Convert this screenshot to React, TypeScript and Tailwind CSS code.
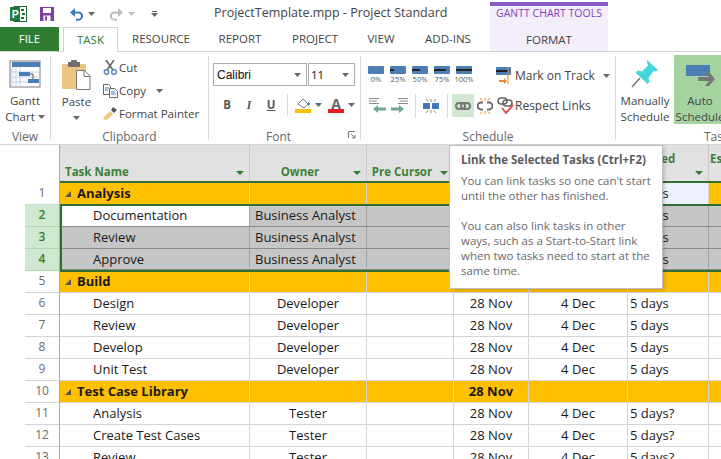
import React from 'react';

const Caret = ({ className = '' }: { className?: string }) => (
  <svg width="7" height="4" viewBox="0 0 7 4" className={className}>
    <path d="M0 0h7L3.5 4z" fill="#666" />
  </svg>
);

const ProjectLogo = () => (
  <svg width="17" height="16" viewBox="0 0 17 16">
    <rect x="4" y="0.5" width="12.5" height="15" fill="#fff" stroke="#1f6b35" />
    <rect x="11" y="3" width="3" height="2" fill="#1f6b35" />
    <rect x="12" y="7" width="3" height="2" fill="#1f6b35" />
    <rect x="11" y="11" width="3" height="2" fill="#1f6b35" />
    <rect x="0" y="1" width="10" height="14" fill="#1f7a3c" />
    <text x="1.8" y="12" fontSize="10.5" fontWeight="700" fill="#fff" fontFamily="Liberation Sans">P</text>
  </svg>
);

const SaveIcon = () => (
  <svg width="14" height="14" viewBox="0 0 14 14">
    <rect width="14" height="14" fill="#7e3fa8" />
    <rect x="3" y="1" width="8" height="5" fill="#fff" />
    <rect x="3.5" y="8.5" width="7" height="5.5" fill="#fff" />
    <rect x="5" y="9.5" width="2" height="4" fill="#7e3fa8" />
  </svg>
);

const UndoIcon = ({ color, flip }: { color: string; flip?: boolean }) => (
  <svg width="15" height="14" viewBox="0 0 15 14" style={flip ? { transform: 'scaleX(-1)' } : undefined}>
    <path d="M2 5.5h7.5a3.6 3.6 0 0 1 0 7.2H7" fill="none" stroke={color} strokeWidth="2" />
    <path d="M6 1 1 5.5 6 10z" fill={color} />
  </svg>
);

const GanttIcon = () => (
  <svg width="32" height="28" viewBox="0 0 32 28">
    <rect x="1" y="1" width="30" height="26" fill="#fff" stroke="#7b7b7b" />
    <rect x="3" y="2" width="28" height="5" fill="#4a7eb5" />
    <path d="M3 12h28M3 17h28M3 22h28M7 7v20M11 7v20M3 7v20" stroke="#bcd0e4" strokeWidth="1" />
    <rect x="10" y="12" width="11" height="4" fill="#4a7eb5" />
    <rect x="19" y="19" width="11" height="4" fill="#4a7eb5" />
    <path d="M21 14h3v5" stroke="#555" fill="none" />
  </svg>
);

const PasteIcon = () => (
  <svg width="29" height="31" viewBox="0 0 29 31">
    <rect x="0" y="4" width="24" height="25" rx="1" fill="#ecc681" />
    <path d="M6 2h12v5H6z" fill="#6f6f6f" />
    <rect x="9" y="0" width="6" height="4" rx="1" fill="#6f6f6f" />
    <path d="M14.5 10.5h8l5.5 5.5v13.5H14.5z" fill="#fff" stroke="#777" />
    <path d="M22 10.5v6h6" fill="none" stroke="#777" />
  </svg>
);

const CutIcon = () => (
  <svg width="15" height="15" viewBox="0 0 15 15">
    <path d="M3 0l7 10M11 0 4 10" stroke="#666" strokeWidth="1.6" fill="none" />
    <circle cx="3.5" cy="12" r="2.3" fill="none" stroke="#3b7bbd" strokeWidth="1.2" />
    <circle cx="11" cy="12" r="2.3" fill="none" stroke="#3b7bbd" strokeWidth="1.2" />
  </svg>
);

const CopyIcon = () => (
  <svg width="15" height="14" viewBox="0 0 15 14">
    <path d="M.5.5h5l2 2v8h-7z" fill="#fff" stroke="#666" />
    <path d="M6.5 4.5h5l3 3v6h-8z" fill="#fff" stroke="#666" />
    <path d="M2 4h4M2 6h3M8 8h4M8 10h5" stroke="#3b7bbd" />
  </svg>
);

const PainterIcon = () => (
  <svg width="16" height="15" viewBox="0 0 16 15">
    <path d="M11 1l4 3-3 3-3-3z" fill="#555" />
    <path d="M8 5l3 3-3 3-3 3-1-1-1 1-2-1 2-3z" fill="#ecc681" />
  </svg>
);

const PctBar = ({ label, fill }: { label: string; fill: number }) => (
  <div className="flex flex-col items-center w-[16px]">
    <div className="w-[16px] h-[8px] bg-[#4a7eb5] rounded-[1px] flex items-center">
      {fill > 0 && <div className="h-[2px] bg-[#222]" style={{ width: `${fill}%` }} />}
    </div>
    <span className="text-[7.5px] leading-[10px] text-[#555] whitespace-nowrap">{label}</span>
  </div>
);

const IndentIcon = ({ flip }: { flip?: boolean }) => (
  <svg width="19" height="16" viewBox="0 0 19 16" style={flip ? { transform: 'scaleX(-1)' } : undefined}>
    <path d="M1 .5h10M1 3h8M1 5.5h10" stroke="#8a8a8a" />
    <path d="M5 11l5-4v2.500h8v3h-8V15z" fill="#6ea796" />
  </svg>
);

const SplitIcon = () => (
  <svg width="16" height="14" viewBox="0 0 16 14">
    <rect x="0" y="4" width="7" height="6" fill="#3f78b8" />
    <rect x="9" y="4" width="7" height="6" fill="#3f78b8" />
    <path d="M8 0v3M8 11v3M3 0l2.500 3M13 0l-2.500 3M3 14l2.500-3M13 14l-2.500-3" stroke="#888" />
  </svg>
);

const LinkIcon = () => (
  <svg width="16" height="8" viewBox="0 0 16 8">
    <rect x="1" y="1" width="9" height="6" rx="3" fill="none" stroke="#777" strokeWidth="2" />
    <rect x="6" y="1" width="9" height="6" rx="3" fill="none" stroke="#777" strokeWidth="2" />
  </svg>
);

const UnlinkIcon = () => (
  <svg width="16" height="16" viewBox="0 0 16 16">
    <path d="M6 4H4a3.500 3.500 0 0 0 0 7h2M10 4h2a3.500 3.500 0 0 1 0 7h-2" transform="translate(0 .5)" fill="none" stroke="#666" strokeWidth="1.800" />
    <path d="M8 0v3M8 13v3M3 0l2 2.500M13 0l-2 2.500M3 16l2-2.500M13 16l-2-2.500" stroke="#ee8a2e" />
  </svg>
);

const RespectIcon = () => (
  <svg width="18" height="18" viewBox="0 0 18 18">
    <rect x="1" y="1" width="9" height="6" rx="3" fill="none" stroke="#666" strokeWidth="1.600" />
    <rect x="6" y="3" width="9" height="6" rx="3" fill="none" stroke="#666" strokeWidth="1.600" />
    <path d="M5 11l4 5 7-8" fill="none" stroke="#d9534f" strokeWidth="2" />
  </svg>
);

const MarkIcon = () => (
  <svg width="18" height="17" viewBox="0 0 18 17">
    <rect x="0" y="0" width="15" height="8" rx="1" fill="#4a7eb5" />
    <rect x="0" y="3" width="12" height="2" fill="#222" />
    <path d="M12 0v17" stroke="#e8872b" />
    <path d="M3 13h5v-2l3 3-3 3v-2H3z" fill="#e8872b" />
  </svg>
);

const PinIcon = () => (
  <svg width="28" height="28" viewBox="0 0 28 28">
    <path d="M1 27l8-9" stroke="#777" strokeWidth="1.500" />
    <path d="M16 0l11 10-2.500 1.500-2-.5-5 7 1 4-2 2L4.500 12.500l2.500-2 4 1 6-6-1-3z" fill="#45d5da" />
  </svg>
);

const AutoIcon = () => (
  <svg width="29" height="22" viewBox="0 0 29 22">
    <rect x="0" y="0" width="24" height="11" fill="#4a7eb5" />
    <path d="M12 12h11l-4-5h4l6 7-6 7h-4l4-5H12z" fill="#777" />
  </svg>
);

const Separator = () => <div className="w-px bg-[#d9d9d9] self-stretch mt-[4px] mb-[4px]" />;

const GroupLabel = ({ children }: { children: React.ReactNode }) => (
  <div className="h-[16px] text-center text-[12px] leading-[18px] text-[#666]">{children}</div>
);

const RibbonLine = ({ icon, label, caret }: { icon: React.ReactNode; label: string; caret?: boolean }) => (
  <div className="flex items-center h-[23px]">
    <div className="w-[18px] flex justify-center">{icon}</div>
    <span className="whitespace-nowrap">{label}</span>
    {caret && <Caret className="ml-[10px]" />}
  </div>
);

const TitleBar = () => (
  <div className="relative h-[27px] flex items-center pl-[10px]">
    <ProjectLogo />
    <div className="ml-[13px]"><SaveIcon /></div>
    <div className="ml-[15px]"><UndoIcon color="#3b7bbd" /></div>
    <Caret className="ml-[4px]" />
    <div className="ml-[14px]"><UndoIcon color="#bdbdbd" flip /></div>
    <Caret className="ml-[4px] opacity-40" />
    <div className="ml-[16px] flex flex-col items-center gap-[1px]">
      <div className="w-[5px] h-px bg-[#666]" />
      <Caret />
    </div>
    <span className="ml-[56px] text-[12.5px] text-[#444] whitespace-nowrap">ProjectTemplate.mpp - Project Standard</span>
  </div>
);

const tabs: [string, string][] = [
  ['RESOURCE', 'w-[86px]'],
  ['REPORT', 'w-[72px]'],
  ['PROJECT', 'w-[78px]'],
  ['VIEW', 'w-[54px]'],
  ['ADD-INS', 'w-[80px]'],
];

const TabBar = () => (
  <div className="relative h-[25px] flex items-stretch border-b border-[#d4d4d4] text-[11.5px] text-[#444]">
    <div className="w-[59px] bg-[#2f7d32] text-white flex items-center justify-center">FILE</div>
    <div className="ml-[4px] w-[55px] h-[25px] bg-white border border-b-0 border-[#d4d4d4] text-[#2f7d32] flex items-center justify-center z-10">TASK</div>
    {tabs.map(([name, w]) => (
      <div key={name} className={`${w} flex items-center justify-center`}>{name}</div>
    ))}
    <div className="w-[118px] ml-[2px] mt-[-25px] h-[49px] bg-[#f4eefb] border-t-[4px] border-[#8a5bc9] flex flex-col items-center text-[#7e3fc0]">
      <span className="text-[10.5px] leading-[16px] mt-[-1px]">GANTT CHART TOOLS</span>
      <span className="mt-[11px] text-[11.5px] leading-[16px] text-[#444]">FORMAT</span>
    </div>
  </div>
);

const Ribbon = () => (
  <div className="h-[93px] flex text-[11.5px] leading-[16px] text-[#444] border-b border-[#d4d4d4]">
    <div className="w-[50px] flex flex-col">
      <div className="flex-1 flex flex-col items-center pt-[8px]">
        <GanttIcon />
        <span className="mt-[5px]">Gantt</span>
        <span className="flex items-center">Chart<Caret className="ml-[3px]" /></span>
      </div>
      <GroupLabel>View</GroupLabel>
    </div>
    <Separator />
    <div className="w-[157px] flex flex-col">
      <div className="flex-1 flex">
        <div className="w-[50px] flex flex-col items-center pt-[8px] pl-[1px]">
          <PasteIcon />
          <span className="mt-[3px]">Paste</span>
          <Caret className="mt-[6px]" />
        </div>
        <div className="flex flex-col pt-[4px]">
          <RibbonLine icon={<CutIcon />} label="Cut" />
          <RibbonLine icon={<CopyIcon />} label="Copy" caret />
          <RibbonLine icon={<PainterIcon />} label="Format Painter" />
        </div>
      </div>
      <GroupLabel>Clipboard</GroupLabel>
    </div>
    <Separator />
    <div className="w-[151px] flex flex-col">
      <div className="flex-1 pt-[11px] pl-[4px]">
        <div className="flex gap-[1px]">
          <div className="w-[94px] h-[23px] border border-[#ababab] flex items-center justify-between px-[3px] pr-[5px] text-[#111]">
            <span className="font-['Liberation_Sans'] text-[12px]">Calibri</span><Caret />
          </div>
          <div className="w-[47px] h-[23px] border border-[#ababab] flex items-center justify-between px-[2px] pr-[5px] text-[#111]">
            <span>11</span><Caret />
          </div>
        </div>
        <div className="flex items-center h-[22px] mt-[8px] text-[#555]">
          <span className="w-[22px] text-center font-bold ml-[3px]">B</span>
          <span className="w-[22px] text-center italic font-['Liberation_Serif'] font-bold">I</span>
          <span className="w-[22px] text-center underline font-bold">U</span>
          <div className="w-px h-[22px] bg-[#d9d9d9] ml-[5px]" />
          <div className="ml-[7px] flex flex-col items-center">
            <svg width="16" height="11" viewBox="0 0 16 11"><path d="M3 6l5-5 5 5-4 4z" fill="#fff" stroke="#777" /><path d="M13 3l2 3-2 2z" fill="#3b7bbd" /></svg>
            <div className="w-[16px] h-[4px] bg-[#ffc000]" />
          </div>
          <Caret className="ml-[4px]" />
          <div className="ml-[6px] flex flex-col items-center">
            <span className="font-bold text-[14px] leading-[11px] text-[#666]">A</span>
            <div className="w-[16px] h-[4px] bg-[#ed1c24]" />
          </div>
          <Caret className="ml-[4px]" />
        </div>
      </div>
      <div className="flex items-start">
        <div className="flex-1"><GroupLabel>Font</GroupLabel></div>
        <svg width="8" height="8" viewBox="0 0 8 8" className="mr-[4px] mt-[3px]">
          <path d="M.5 7V.5H7M3 3l4 4M7 4v3H4" fill="none" stroke="#777" />
        </svg>
      </div>
    </div>
    <Separator />
    <div className="w-[254px] flex flex-col">
      <div className="flex-1 pl-[7px] pt-[14px]">
        <div className="flex items-start h-[26px]">
          <div className="flex gap-[6px]">
            <PctBar label="0%" fill={0} />
            <PctBar label="25%" fill={25} />
            <PctBar label="50%" fill={50} />
            <PctBar label="75%" fill={75} />
            <PctBar label="100%" fill={100} />
          </div>
          <div className="ml-[24px] mt-[1px] flex items-center text-[12px]">
            <MarkIcon />
            <span className="ml-[1px]">Mark on Track</span>
            <Caret className="ml-[8px]" />
          </div>
        </div>
        <div className="flex items-center h-[23px] mt-[2px]">
          <IndentIcon />
          <div className="ml-[3px]"><IndentIcon flip /></div>
          <div className="w-px h-[24px] bg-[#d9d9d9] ml-[6px]" />
          <div className="ml-[7px]"><SplitIcon /></div>
          <div className="w-px h-[24px] bg-[#d9d9d9] ml-[8px]" />
          <div className="ml-[4px] w-[22px] h-[23px] bg-[#cfe8cf] flex items-center justify-center"><LinkIcon /></div>
          <div className="ml-[3px]"><UnlinkIcon /></div>
          <div className="ml-[4px]"><RespectIcon /></div>
          <span className="whitespace-nowrap text-[12px]">Respect Links</span>
        </div>
      </div>
      <GroupLabel>Schedule</GroupLabel>
    </div>
    <Separator />
    <div className="flex-1 flex flex-col min-w-0">
      <div className="flex-1 flex">
        <div className="w-[58px] flex flex-col items-center pt-[8px]">
          <PinIcon />
          <span className="mt-[5px]">Manually</span>
          <span>Schedule</span>
        </div>
        <div className="w-[47px] h-[69px] mt-[3px] bg-[#a5d3a0] overflow-hidden">
          <div className="w-[52px] flex flex-col items-center pt-[10px]">
            <AutoIcon />
            <span className="mt-[6px]">Auto</span>
            <span>Schedule</span>
          </div>
        </div>
      </div>
      <div className="h-[16px] pl-[88px] text-[12px] text-[#666] leading-[18px]">Tas</div>
    </div>
  </div>
);

type Row = { id: number; name: string; owner: string; start: string; finish: string; dur: string; kind: 'sum' | 'sel' | 'task' };

const rows: Row[] = [
  { id: 1, name: 'Analysis', owner: '', start: '28 Nov', finish: '4 Dec', dur: '5 days', kind: 'sum' },
  { id: 2, name: 'Documentation', owner: 'Business Analyst', start: '28 Nov', finish: '4 Dec', dur: '5 days', kind: 'sel' },
  { id: 3, name: 'Review', owner: 'Business Analyst', start: '28 Nov', finish: '4 Dec', dur: '5 days', kind: 'sel' },
  { id: 4, name: 'Approve', owner: 'Business Analyst', start: '28 Nov', finish: '4 Dec', dur: '5 days', kind: 'sel' },
  { id: 5, name: 'Build', owner: '', start: '28 Nov', finish: '', dur: '', kind: 'sum' },
  { id: 6, name: 'Design', owner: 'Developer', start: '28 Nov', finish: '4 Dec', dur: '5 days', kind: 'task' },
  { id: 7, name: 'Review', owner: 'Developer', start: '28 Nov', finish: '4 Dec', dur: '5 days', kind: 'task' },
  { id: 8, name: 'Develop', owner: 'Developer', start: '28 Nov', finish: '4 Dec', dur: '5 days', kind: 'task' },
  { id: 9, name: 'Unit Test', owner: 'Developer', start: '28 Nov', finish: '4 Dec', dur: '5 days', kind: 'task' },
  { id: 10, name: 'Test Case Library', owner: '', start: '28 Nov', finish: '', dur: '', kind: 'sum' },
  { id: 11, name: 'Analysis', owner: 'Tester', start: '28 Nov', finish: '4 Dec', dur: '5 days?', kind: 'task' },
  { id: 12, name: 'Create Test Cases', owner: 'Tester', start: '28 Nov', finish: '4 Dec', dur: '5 days?', kind: 'task' },
  { id: 13, name: 'Review', owner: 'Tester', start: '28 Nov', finish: '4 Dec', dur: '5 days?', kind: 'task' },
];

const DataRow = ({ row }: { row: Row }) => {
  const sum = row.kind === 'sum';
  const sel = row.kind === 'sel';
  const line = sel ? 'border-[#a3a3a3]' : 'border-[#d4d4d4]';
  const bg = sum ? 'bg-[#ffc000]' : sel ? 'bg-[#c6c6c6]' : 'bg-white';
  const cell = `h-full border-r ${line} flex items-center shrink-0 ${row.id === 4 ? 'pt-[1px]' : ''}`;
  const nameClass = sel
    ? `w-[188px] pl-[31px] ${row.id === 2 ? 'bg-white' : bg}`
    : `w-[190px] ${bg} ${sum ? 'pl-[5px]' : 'pl-[33px]'}`;
  return (
    <div className={`flex ${row.id === 3 || !sel ? 'h-[22px]' : 'h-[21px]'} border-b ${sel ? 'border-[#8c8c8c]' : line} ${sum ? 'font-bold' : ''}`}>
      <div className={`${cell} ${nameClass}`}>
        {sum && (
          <svg width="6" height="6" viewBox="0 0 6 6" className="mr-[6px]"><path d="M6 0v6H0z" fill="#555" /></svg>
        )}
        {row.name}
      </div>
      <div className={`${cell} ${bg} w-[117px] ${sel ? 'pl-[5px]' : 'justify-center'}`}>{row.owner}</div>
      <div className={`${cell} ${bg} w-[87px]`} />
      <div className={`${cell} ${bg} w-[75px] justify-center`}>{row.start}</div>
      <div className={`${cell} ${bg} w-[99px] justify-center`}>
        {row.id === 5 ? <span className="w-[42px] self-end mb-[3px] border-b border-dashed border-[#e02020]" /> : row.finish}
      </div>
      <div className={`${cell} w-[81px] pl-[2px] ${row.id === 1 ? 'bg-[#edf2fc] font-normal' : bg}`}>{row.dur}</div>
      <div className={`h-full flex-1 ${bg}`} />
    </div>
  );
};

const HeaderCell = ({ w, label, center = true, two }: { w: string; label: string; center?: boolean; two?: boolean }) => (
  <div className={`${w} relative shrink-0 h-full border-r border-[#c8c8c8] flex ${two ? 'items-start pt-[5px] pl-[3px]' : 'items-end pb-[1px]'} ${!two && center ? 'justify-center pr-[16px]' : ''} ${!two && !center ? 'pl-[5px]' : ''}`}>
    <span className="whitespace-nowrap">{label}</span>
    <svg width="8" height="4" viewBox="0 0 8 4" className="absolute right-[5px] bottom-[6px]"><path d="M0 0h8L4 4z" fill="#2f7d32" /></svg>
  </div>
);

const Grid = () => {
  const before = rows.slice(0, 1);
  const selected = rows.filter((r) => r.kind === 'sel');
  const after = rows.slice(4);
  return (
    <div className="flex text-[13px] text-[#1a1a1a]">
      <div className="w-[60px] shrink-0 border-r border-[#ababab] pl-[25px]">
        <div className="h-[38px]" />
        {rows.map((r) => (
          <div key={r.id} className={`h-[22px] border-b pb-[2px] flex items-center justify-center text-[12px] ${r.kind === 'sel' ? 'bg-[#cfe8cf] text-[#2f7d32] border-[#b5d6b5] font-semibold' : 'text-[#6b6b6b] border-[#d4d4d4]'}`}>
            {r.id}
          </div>
        ))}
      </div>
      <div className="flex-1 min-w-0">
        <div className="h-[38px] bg-[#e1e1e1] border-b-2 border-[#2f6f2f] flex text-[11.5px] font-bold text-[#3f7f3a]">
          <HeaderCell w="w-[190px]" label="Task Name" center={false} />
          <HeaderCell w="w-[117px]" label="Owner" />
          <HeaderCell w="w-[87px]" label="Pre Cursor" />
          <HeaderCell w="w-[75px]" label="Start" />
          <HeaderCell w="w-[99px]" label="Finish" />
          <HeaderCell w="w-[81px]" label="Needed" two />
          <div className="flex-1 pl-[1px] pt-[5px] whitespace-nowrap overflow-hidden">Estimate</div>
        </div>
        {before.map((r) => <DataRow key={r.id} row={r} />)}
        <div className="h-[68px] border-y-2 border-l-2 border-[#2f6f2f] mt-[-1px] mb-[-1px] relative">
          {selected.map((r) => <DataRow key={r.id} row={r} />)}
        </div>
        {after.map((r) => <DataRow key={r.id} row={r} />)}
      </div>
    </div>
  );
};

export default function App() {
  return (
    <div className="relative w-[721px] h-[459px] overflow-hidden bg-white font-['Open_Sans',sans-serif]">
      <TitleBar />
      <TabBar />
      <Ribbon />
      <Grid />
      <div className="absolute left-[449px] top-[145px] w-[214px] h-[144px] bg-white border border-[#bdbdbd] shadow-[2px_2px_3px_rgba(0,0,0,0.15)] pl-[11px] pt-[6px] text-[11.5px] leading-[15px] text-[#6a6a6a]">
        <div className="font-bold text-[#5c5c5c] whitespace-nowrap">Link the Selected Tasks (Ctrl+F2)</div>
        <div className="mt-[6px] whitespace-nowrap">You can link tasks so one can't start<br />until the other has finished.</div>
        <div className="mt-[15px] whitespace-nowrap">You can also link tasks in other<br />ways, such as a Start-to-Start link<br />when two tasks need to start at the<br />same time.</div>
      </div>
    </div>
  );
}
